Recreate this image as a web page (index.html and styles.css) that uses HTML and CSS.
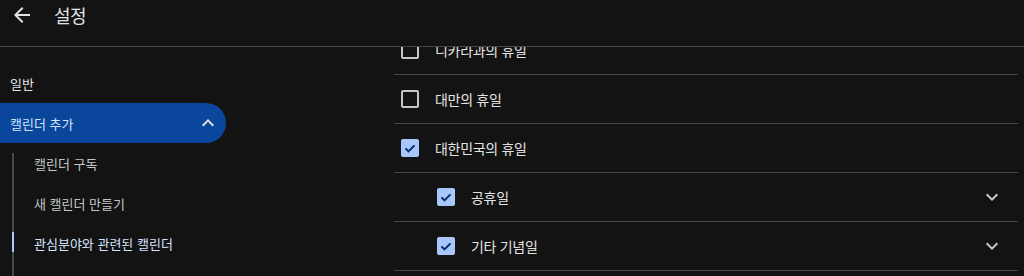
FILE: index.html
```html
<!DOCTYPE html>
<html lang="ko">
<head>
<meta charset="utf-8">
<title>설정</title>
<link rel="stylesheet" href="styles.css">
</head>
<body>
<header class="topbar">
  <svg class="back" viewBox="0 0 24 24" width="24" height="24"><path d="M20 11H7.83l5.59-5.59L12 4l-8 8 8 8 1.41-1.41L7.83 13H20v-2z" fill="currentColor"/></svg>
  <h1 class="title">설정</h1>
</header>
<div class="layout">
  <nav class="sidebar">
    <div class="nav-item">일반</div>
    <div class="nav-item selected">
      <span>캘린더 추가</span>
      <svg class="chev" viewBox="0 0 24 24" width="24" height="24"><path d="M12 8l-6 6 1.41 1.41L12 10.83l4.59 4.58L18 14z" fill="currentColor"/></svg>
    </div>
    <div class="sublist">
      <div class="sub-item">캘린더 구독</div>
      <div class="sub-item">새 캘린더 만들기</div>
      <div class="sub-item active">관심분야와 관련된 캘린더</div>
    </div>
  </nav>
  <main class="content">
    <div class="list">
      <div class="row"><span class="box"></span><span class="label">니카라과의 휴일</span></div>
      <div class="row"><span class="box"></span><span class="label">대만의 휴일</span></div>
      <div class="row"><span class="box checked"><svg viewBox="0 0 24 24" width="18" height="18"><path d="M6 12.5l4 4 8-8" fill="none" stroke="currentColor" stroke-width="2.8"/></svg></span><span class="label">대한민국의 휴일</span></div>
      <div class="row sub"><span class="box checked"><svg viewBox="0 0 24 24" width="18" height="18"><path d="M6 12.5l4 4 8-8" fill="none" stroke="currentColor" stroke-width="2.8"/></svg></span><span class="label">공휴일</span><svg class="more" viewBox="0 0 24 24" width="24" height="24"><path d="M16.59 8.59L12 13.17 7.41 8.59 6 10l6 6 6-6z" fill="currentColor"/></svg></div>
      <div class="row sub"><span class="box checked"><svg viewBox="0 0 24 24" width="18" height="18"><path d="M6 12.5l4 4 8-8" fill="none" stroke="currentColor" stroke-width="2.8"/></svg></span><span class="label">기타 기념일</span><svg class="more" viewBox="0 0 24 24" width="24" height="24"><path d="M16.59 8.59L12 13.17 7.41 8.59 6 10l6 6 6-6z" fill="currentColor"/></svg></div>
      <div class="row"></div>
    </div>
  </main>
</div>
</body>
</html>
```

FILE: styles.css
```css
* { box-sizing: border-box; }
html, body {
  margin: 0;
  padding: 0;
  background: #131313;
  height: 276px;
  overflow: hidden;
}
body {
  font-family: "Noto Sans CJK KR", "Noto Sans", sans-serif;
  color: #e3e3e3;
}
.topbar {
  height: 47px;
  border-bottom: 1px solid #474747;
  display: flex;
  align-items: center;
  padding-left: 10px;
  padding-bottom: 17px;
}
.back { color: #e3e3e3; display: block; }
.title {
  margin: 0 0 0 20px;
  font-size: 18px;
  font-weight: 400;
  letter-spacing: -0.5px;
  line-height: 24px;
  color: #e3e3e3;
}
.layout {
  display: grid;
  grid-template-columns: 394px 1fr;
  height: 229px;
  overflow: hidden;
}
.sidebar {
  padding-top: 16px;
  font-size: 13px;
  letter-spacing: 0;
}
.nav-item {
  height: 40px;
  display: flex;
  align-items: center;
  padding-left: 10px;
  color: #e3e3e3;
  width: 226px;
}
.nav-item.selected {
  background: #0a479c;
  border-radius: 0 20px 20px 0;
  color: #d3e3fd;
  justify-content: space-between;
  padding-right: 6px;
}
.chev { color: #e3e3e3; display: block; }
.sublist {
  position: relative;
  margin-left: 12px;
  height: 140px;
}
.sublist::before {
  content: "";
  position: absolute;
  left: 0;
  top: 10px;
  bottom: 0;
  width: 2px;
  background: #444746;
}
.sub-item {
  position: relative;
  height: 40px;
  display: flex;
  align-items: center;
  padding-left: 22px;
  color: #c4c7c5;
}
.sub-item.active { color: #d3e3fd; }
.sub-item.active::before {
  content: "";
  position: absolute;
  left: 0;
  top: 9px;
  height: 20px;
  width: 2px;
  background: #a8c7fa;
}
.content {
  overflow: hidden;
  padding-right: 6px;
}
.list { margin-top: -21px; }
.row {
  height: 49px;
  border-bottom: 1px solid #444746;
  display: flex;
  align-items: center;
  padding-left: 7px;
  font-size: 14px;
  letter-spacing: -0.3px;
}
.row.sub { padding-left: 43px; }
.box {
  width: 18px;
  height: 18px;
  border: 2px solid #c4c7c5;
  border-radius: 2px;
  margin-right: 16px;
  flex: none;
  display: flex;
  align-items: center;
  justify-content: center;
}
.box.checked {
  background: #a8c7fa;
  border-color: #a8c7fa;
  color: #062e6f;
}
.box svg { display: block; flex: none; }
.label { color: #e3e3e3; }
.more {
  margin-left: auto;
  margin-right: 14px;
  color: #c4c7c5;
  display: block;
}
```
